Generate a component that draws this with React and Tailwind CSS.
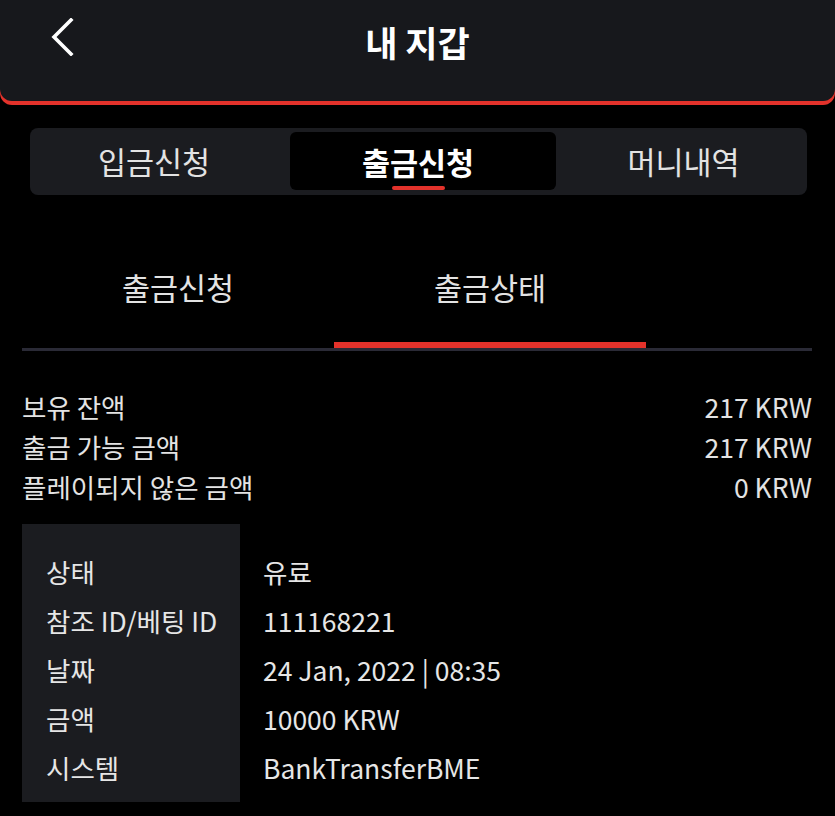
import React from "react";

const font = { fontFamily: '"Noto Sans CJK KR", "Noto Sans", sans-serif' };

export default function App() {
  const details = [
    ["상태", "유료"],
    ["참조 ID/베팅 ID", "111168221"],
    ["날짜", "24 Jan, 2022 | 08:35"],
    ["금액", "10000 KRW"],
    ["시스템", "BankTransferBME"],
  ];
  const balances = [
    ["보유 잔액", "217 KRW"],
    ["출금 가능 금액", "217 KRW"],
    ["플레이되지 않은 금액", "0 KRW"],
  ];
  return (
    <div className="min-h-[816px] w-full bg-black text-[#e6e6e6] overflow-hidden font-['Noto_Sans_CJK_KR','Noto_Sans',sans-serif]" style={font}>
      {/* Header */}
      <div className="bg-[#e3322b] rounded-b-[12px] pb-[4px]">
        <div className="bg-[#17181c] rounded-b-[12px] h-[101px]">
          <div className="grid grid-cols-[1fr_auto_1fr] items-center h-[82px]">
            <div className="pl-[50px] flex items-center">
              <svg width="24" height="38" viewBox="0 0 24 38" className="-mt-[8px]">
                <path d="M21 2 L4 19 L21 36" fill="none" stroke="#ffffff" strokeWidth="3.6" strokeLinecap="square" strokeLinejoin="miter" />
              </svg>
            </div>
            <div className="text-[35px] font-bold text-white leading-none">내 지갑</div>
            <div />
          </div>
        </div>
      </div>

      {/* Segment tabs */}
      <div className="mt-[23px] ml-[30px] w-[777px] h-[67px] bg-[#1b1c20] rounded-[8px] px-[4px] pt-[4px] pb-[5px] flex">
        <div className="w-[256px] flex items-center justify-center pr-[16px] text-[30.5px] text-[#e3e3e3] leading-none">입금신청</div>
        <div className="w-[266px] bg-black rounded-[6px] flex flex-col items-center pt-[12px] pr-[10px]">
          <div className="text-[30.5px] font-bold text-white leading-[36px] h-[36px]">출금신청</div>
          <div className="mt-[6px] w-[53px] h-[5px] rounded-full bg-[#e3322b]" />
        </div>
        <div className="flex-1 flex items-center justify-center pl-[8px] text-[30.5px] text-[#e3e3e3] leading-none">머니내역</div>
      </div>

      {/* Sub tabs */}
      <div className="mt-[55px] ml-[22px] w-[790px] border-b-[3px] border-[#2a2a36] flex">
        <div className="w-[312px] flex flex-col items-center pt-[17px]">
          <div className="text-[30.5px] leading-[40px] h-[40px] text-[#e3e3e3]">출금신청</div>
          <div className="mt-[35px] h-[6px] w-full bg-transparent" />
        </div>
        <div className="w-[312px] flex flex-col items-center pt-[17px]">
          <div className="text-[30.5px] leading-[40px] h-[40px] text-[#e3e3e3]">출금상태</div>
          <div className="mt-[35px] h-[6px] w-full bg-[#e3322b]" />
        </div>
      </div>

      {/* Balances */}
      <div className="mt-[36px] ml-[22px] w-[790px] flex flex-col">
        {balances.map(([k, v]) => (
          <div key={k} className="flex justify-between items-center h-[40px] text-[26.5px] leading-[40px] text-[#e3e3e3]">
            <span>{k}</span>
            <span>{v}</span>
          </div>
        ))}
      </div>

      {/* Detail table */}
      <div className="mt-[17px] ml-[22px] flex">
        <div className="w-[218px] bg-[#1b1c20] pl-[24px] pt-[23px] pb-[10px] flex flex-col">
          {details.map(([k]) => (
            <div key={k} className="h-[49px] flex items-center text-[26.5px] text-[#e6e6e6] whitespace-nowrap">{k}</div>
          ))}
        </div>
        <div className="pl-[23px] pt-[23px] pb-[10px] flex flex-col">
          {details.map(([k, v]) => (
            <div key={k} className="h-[49px] flex items-center text-[26.5px] text-[#e6e6e6] whitespace-nowrap">{v}</div>
          ))}
        </div>
      </div>
    </div>
  );
}
